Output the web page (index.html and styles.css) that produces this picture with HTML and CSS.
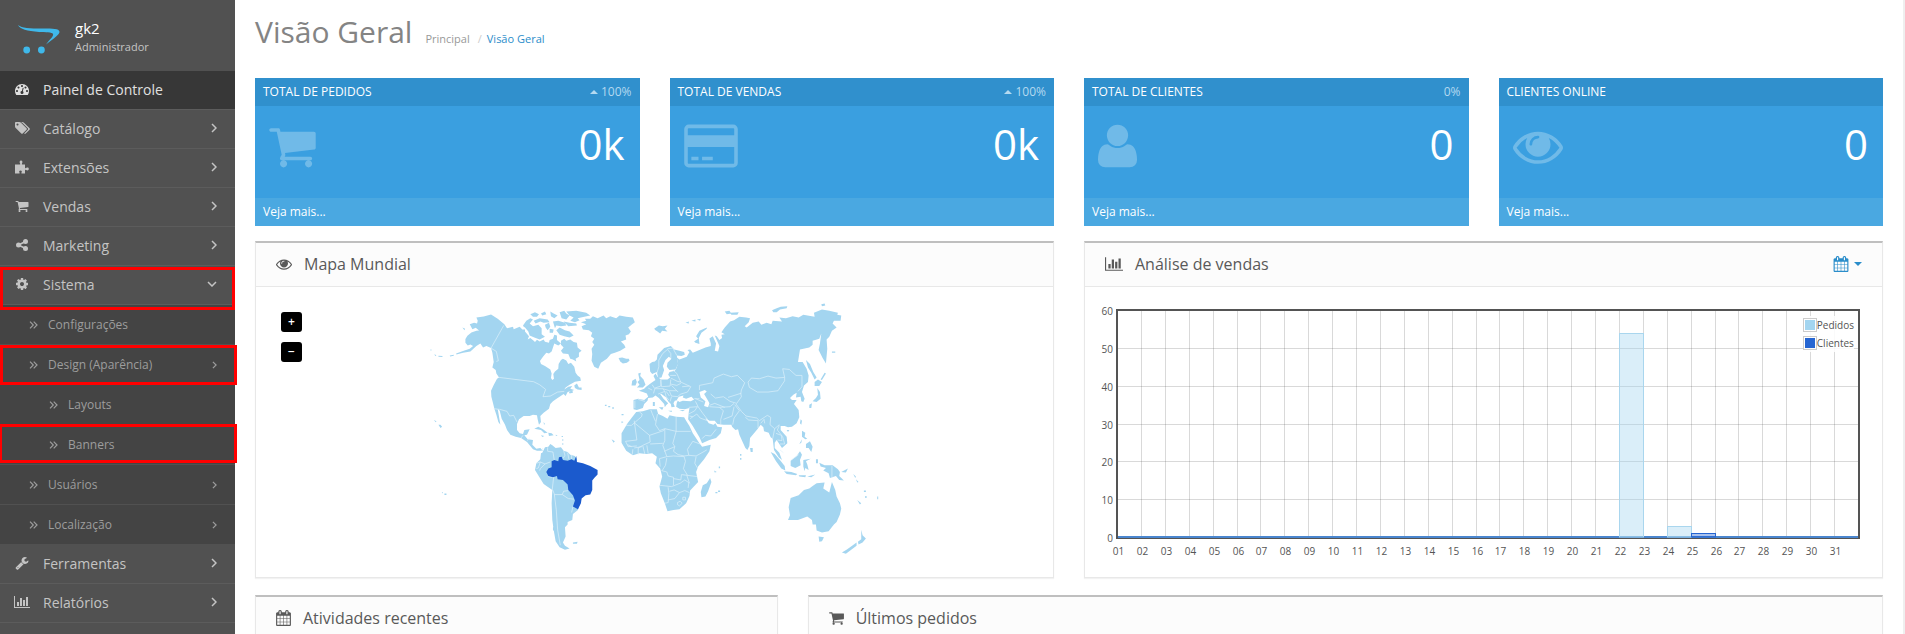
FILE: index.html
```html
<!DOCTYPE html>
<html lang="pt-br">
<head>
    <meta charset="UTF-8">
    <title>Visão Geral</title>
    <meta name="viewport" content="width=device-width, initial-scale=1">
    <link rel="stylesheet" href="styles.css">
</head>
<body>
<!-- icon set -->
<svg class="sprite" aria-hidden="true">
    <symbol id="i-dashboard" viewBox="0 0 1792 1792"><path d="M384 1152q0-53-37.500-90.500t-90.500-37.500-90.500 37.500-37.500 90.500 37.500 90.500 90.500 37.500 90.500-37.500 37.500-90.500zm192-448q0-53-37.500-90.500t-90.500-37.500-90.500 37.500-37.500 90.500 37.500 90.500 90.500 37.500 90.500-37.500 37.500-90.500zm428 481l101-382q6-26-7.500-48.500t-38.500-29.500-48 6.500-30 39.500l-101 382q-60 5-107 43.500t-63 98.500q-20 77 20 146t117 89 146-20 89-117q16-60-6-117t-72-91zm660-33q0-53-37.500-90.500t-90.500-37.500-90.500 37.500-37.500 90.500 37.500 90.500 90.500 37.500 90.500-37.500 37.500-90.500zm-640-640q0-53-37.500-90.500t-90.500-37.500-90.500 37.500-37.500 90.500 37.500 90.500 90.500 37.500 90.500-37.500 37.500-90.500zm448 192q0-53-37.500-90.500t-90.500-37.500-90.500 37.500-37.500 90.500 37.500 90.500 90.500 37.500 90.500-37.500 37.500-90.500zm320 448q0 261-141 483-19 29-54 29h-1402q-35 0-54-29-141-221-141-483 0-182 71-348t191-286 286-191 348-71 348 71 286 191 191 286 71 348z"/></symbol>
    <symbol id="i-tags" viewBox="0 0 2048 1792"><path d="M576 448q0-53-37.500-90.500t-90.500-37.500-90.500 37.500-37.500 90.500 37.500 90.500 90.500 37.500 90.500-37.500 37.500-90.500zm1067 576q0 53-37 90l-491 492q-39 37-91 37-53 0-90-37l-715-716q-38-37-64.500-101t-26.500-117v-416q0-52 38-90t90-38h416q53 0 117 26.500t102 64.500l715 714q37 39 37 91zm384 0q0 53-37 90l-491 492q-39 37-91 37-36 0-59-14t-53-45l470-470q37-37 37-90 0-52-37-91l-715-714q-38-38-102-64.500t-117-26.500h224q53 0 117 26.500t102 64.500l715 714q37 39 37 91z"/></symbol>
    <symbol id="i-puzzle" viewBox="0 0 14 14"><path d="M0 4.500h4.600c.7 0 .9-.6.500-1.100C4.200 2.100 4.600.5 6 .5s1.900 1.500 1 2.900c-.4.600-.1 1.100.6 1.100H10v3c0 .8.500 1 1.100.6 1.200-.9 2.700-.5 2.700.9s-1.500 1.800-2.700 1c-.6-.5-1.100-.2-1.100.5v3H7c-.6 0-.8-.5-.5-1.100.6-1 .3-1.900-1-1.900s-1.700 1-1 2c.4.600.1 1-.5 1H0z"/></symbol>
    <symbol id="i-cart" viewBox="64 0 1664 1792"><path d="M704 1536q0 52-38 90t-90 38-90-38-38-90 38-90 90-38 90 38 38 90zm896 0q0 52-38 90t-90 38-90-38-38-90 38-90 90-38 90 38 38 90zm128-1088v512q0 24-16.500 42.500t-40.500 21.500l-1044 122q13 60 13 70 0 16-24 64h920q26 0 45 19t19 45-19 45-45 19h-1024q-26 0-45-19t-19-45q0-11 8-31.500t16-36 21.500-40 15.500-29.500l-177-823h-204q-26 0-45-19t-19-45 19-45 45-19h256q16 0 28.500 6.500t19.500 15.500 13 24.500 8 26 5.500 29.500 4.500 26h1201q26 0 45 19t19 45z"/></symbol>
    <symbol id="i-share" viewBox="0 0 12 14"><path d="M9.500 3.500L2.500 7l7 3.500" fill="none" stroke="currentColor" stroke-width="1.600"/><circle cx="9.500" cy="3.500" r="2.500"/><circle cx="2.500" cy="7" r="2.500"/><circle cx="9.500" cy="10.500" r="2.500"/></symbol>
    <symbol id="i-cog" viewBox="0 0 1792 1792"><path d="M1152 896q0-106-75-181t-181-75-181 75-75 181 75 181 181 75 181-75 75-181zm512-109v222q0 12-8 23t-20 13l-185 28q-19 54-39 91 35 50 107 138 10 12 10 25t-9 23q-27 37-99 108t-94 71q-12 0-26-9l-138-108q-44 23-91 38-16 136-29 186-7 28-36 28h-222q-14 0-24.500-8.500t-11.500-21.500l-28-184q-49-16-90-37l-141 107q-10 9-25 9-14 0-25-11-126-114-165-168-7-10-7-23 0-12 8-23 15-21 51-66.500t54-70.500q-27-50-41-99l-183-27q-13-2-21-12.500t-8-23.500v-222q0-12 8-23t19-13l186-28q14-46 39-92-40-57-107-138-10-12-10-24 0-10 9-23 26-36 98.500-107.500t94.500-71.500q13 0 26 10l138 107q44-23 91-38 16-136 29-186 7-28 36-28h222q14 0 24.500 8.500t11.500 21.500l28 184q49 16 90 37l142-107q9-9 24-9 13 0 25 10 129 119 165 170 7 8 7 22 0 12-8 23-15 21-51 66.500t-54 70.500q26 50 41 98l183 28q13 2 21 12.500t8 23.500z"/></symbol>
    <symbol id="i-wrench" viewBox="0 0 1792 1792"><path d="M448 1472q0-26-19-45t-45-19-45 19-19 45 19 45 45 19 45-19 19-45zm644-420l-682 682q-37 37-90 37-52 0-91-37l-106-108q-38-36-38-90 0-53 38-91l681-681q39 98 114.500 173.500t173.500 114.500zm634-435q0 39-23 106-47 134-164.500 217.500t-258.500 83.500q-185 0-316.500-131.500t-131.500-316.500 131.500-316.500 316.500-131.500q58 0 121.500 16.500t107.500 46.500q16 11 16 28t-16 28l-293 169v224l193 107q5-3 79-48.500t135.500-81 70.500-35.500q15 0 23.500 10t8.500 25z"/></symbol>
    <symbol id="i-chart" viewBox="0 0 2048 1792"><path d="M640 896v512h-256v-512h256zm384-512v1024h-256v-1024h256zm1024 1152v128h-2048v-1536h128v1408h1920zm-640-896v768h-256v-768h256zm384-384v1152h-256v-1152h256z"/></symbol>
    <symbol id="i-eye" viewBox="0 0 1792 1792"><path d="M1664 960q-152-236-381-353 61 104 61 225 0 185-131.500 316.500t-316.500 131.500-316.500-131.500-131.500-316.500q0-121 61-225-229 117-381 353 133 205 333.500 326.500t434.500 121.500 434.500-121.500 333.500-326.500zm-720-384q0-20-14-34t-34-14q-125 0-214.500 89.500t-89.500 214.500q0 20 14 34t34 14 34-14 14-34q0-86 61-147t147-61q20 0 34-14t14-34zm848 384q0 34-20 69-140 230-376.500 368.500t-499.500 138.500-499.500-139-376.500-368q-20-35-20-69t20-69q140-229 376.500-368t499.500-139 499.500 139 376.500 368q20 35 20 69z"/></symbol>
    <symbol id="i-calendar" viewBox="64 0 1664 1792"><path d="M192 1664h288v-288h-288v288zm352 0h320v-288h-320v288zm-352-352h288v-320h-288v320zm352 0h320v-320h-320v320zm-352-384h288v-288h-288v288zm736 736h320v-288h-320v288zm-384-736h320v-288h-320v288zm768 736h288v-288h-288v288zm-384-352h320v-320h-320v320zm-352-864v-288q0-13-9.500-22.500t-22.500-9.500h-64q-13 0-22.500 9.500t-9.500 22.500v288q0 13 9.500 22.500t22.500 9.500h64q13 0 22.500-9.500t9.500-22.500zm736 864h288v-320h-288v320zm-384-384h320v-288h-320v288zm384 0h288v-288h-288v288zm32-480v-288q0-13-9.500-22.500t-22.500-9.500h-64q-13 0-22.500 9.500t-9.500 22.500v288q0 13 9.500 22.500t22.500 9.500h64q13 0 22.500-9.500t9.500-22.500zm384-64v1280q0 52-38 90t-90 38h-1408q-52 0-90-38t-38-90v-1280q0-52 38-90t90-38h128v-96q0-66 47-113t113-47h64q66 0 113 47t47 113v96h384v-96q0-66 47-113t113-47h64q66 0 113 47t47 113v96h128q52 0 90 38t38 90z"/></symbol>
    <symbol id="i-user" viewBox="192 0 1408 1792"><path d="M1600 1405q0 120-73 189.500t-194 69.500h-874q-121 0-194-69.500t-73-189.500q0-53 3.500-103.500t14-109 26.500-108.500 43-97.500 62-81 85.500-53.500 111.500-20q9 0 42 21.500t74.500 48 108 48 133.500 21.500 133.500-21.500 108-48 74.500-48 42-21.500q61 0 111.500 20t85.500 53.500 62 81 43 97.500 26.500 108.500 14 109 3.500 103.500zm-320-893q0 159-112.500 271.500t-271.500 112.500-271.500-112.500-112.500-271.500 112.500-271.500 271.500-112.500 271.500 112.500 112.500 271.500z"/></symbol>
    <symbol id="i-card" viewBox="0 0 1920 1792"><path d="M1760 128q66 0 113 47t47 113v1216q0 66-47 113t-113 47h-1600q-66 0-113-47t-47-113v-1216q0-66 47-113t113-47h1600zm-1600 128q-13 0-22.500 9.500t-9.500 22.500v224h1664v-224q0-13-9.500-22.500t-22.500-9.500h-1600zm1600 1280q13 0 22.500-9.500t9.500-22.500v-576h-1664v576q0 13 9.500 22.500t22.500 9.500h1600zm-1504-128v-128h256v128h-256zm384 0v-128h384v128h-384z"/></symbol>
    <symbol id="i-right" viewBox="0 0 6 10"><path d="M1 1l4 4-4 4" fill="none" stroke="currentColor" stroke-width="1.500"/></symbol>
    <symbol id="i-down" viewBox="0 0 10 6"><path d="M1 1l4 4 4-4" fill="none" stroke="currentColor" stroke-width="1.500"/></symbol>
    <symbol id="i-double" viewBox="0 0 9 8"><path d="M1 .7L4.300 4 1 7.300M4.700.7L8 4 4.700 7.300" fill="none" stroke="currentColor" stroke-width="1.200"/></symbol>
</svg>

<div class="page">
    <nav class="sidebar">
        <div class="profile">
            <svg class="logo" viewBox="0 0 42 30">
                <path d="M0 1C4 4.200 11 4.500 25 4.500c10 0 16 0 16.500 3.200C41.800 10.500 36 14 28 20.500c3.500-5 8-8.500 7-10.500-1-2-7-1.500-14-2C9 7 2 5 0 1z"/>
                <circle cx="8.700" cy="26" r="3.400"/><circle cx="23.400" cy="26" r="3.400"/>
            </svg>
            <div>
                <div class="profile-name">gk2</div>
                <div class="profile-group">Administrador</div>
            </div>
        </div>
        <ul class="menu">
            <li class="active"><a href="#"><svg class="icon"><use href="#i-dashboard"/></svg>Painel de Controle</a></li>
            <li><a href="#"><svg class="icon"><use href="#i-tags"/></svg>Catálogo<svg class="arrow"><use href="#i-right"/></svg></a></li>
            <li><a href="#"><svg class="icon"><use href="#i-puzzle"/></svg>Extensões<svg class="arrow"><use href="#i-right"/></svg></a></li>
            <li><a href="#"><svg class="icon"><use href="#i-cart"/></svg>Vendas<svg class="arrow"><use href="#i-right"/></svg></a></li>
            <li><a href="#"><svg class="icon"><use href="#i-share"/></svg>Marketing<svg class="arrow"><use href="#i-right"/></svg></a></li>
            <li class="marked marked-main"><a href="#"><svg class="icon"><use href="#i-cog"/></svg>Sistema<svg class="arrow open"><use href="#i-down"/></svg></a></li>
        </ul>
        <ul class="submenu">
            <li><a href="#"><svg class="double"><use href="#i-double"/></svg>Configurações</a></li>
            <li class="marked marked-sub"><a href="#"><svg class="double"><use href="#i-double"/></svg>Design (Aparência)<svg class="arrow small"><use href="#i-right"/></svg></a></li>
            <li class="nested"><a href="#"><svg class="double"><use href="#i-double"/></svg>Layouts</a></li>
            <li class="nested last marked marked-nested"><a href="#"><svg class="double"><use href="#i-double"/></svg>Banners</a></li>
            <li><a href="#"><svg class="double"><use href="#i-double"/></svg>Usuários<svg class="arrow small"><use href="#i-right"/></svg></a></li>
            <li><a href="#"><svg class="double"><use href="#i-double"/></svg>Localização<svg class="arrow small"><use href="#i-right"/></svg></a></li>
        </ul>
        <ul class="menu">
            <li><a href="#"><svg class="icon"><use href="#i-wrench"/></svg>Ferramentas<svg class="arrow"><use href="#i-right"/></svg></a></li>
            <li><a href="#"><svg class="icon"><use href="#i-chart"/></svg>Relatórios<svg class="arrow"><use href="#i-right"/></svg></a></li>
        </ul>
    </nav>

    <main class="content">
        <header class="page-header">
            <h1>Visão Geral</h1>
            <div class="breadcrumb">
                <a href="#">Principal</a>
                <span>/</span>
                <a class="current" href="#">Visão Geral</a>
            </div>
        </header>

        <div class="row">
            <section class="tile">
                <div class="tile-heading">TOTAL DE PEDIDOS <span class="percent"><i class="caret-up"></i>100%</span></div>
                <div class="tile-body"><svg class="tile-icon"><use href="#i-cart"/></svg><span class="value">0k</span></div>
                <a class="tile-footer" href="#">Veja mais...</a>
            </section>
            <section class="tile">
                <div class="tile-heading">TOTAL DE VENDAS <span class="percent"><i class="caret-up"></i>100%</span></div>
                <div class="tile-body"><svg class="tile-icon card"><use href="#i-card"/></svg><span class="value">0k</span></div>
                <a class="tile-footer" href="#">Veja mais...</a>
            </section>
            <section class="tile">
                <div class="tile-heading">TOTAL DE CLIENTES <span class="percent">0%</span></div>
                <div class="tile-body"><svg class="tile-icon user"><use href="#i-user"/></svg><span class="value">0</span></div>
                <a class="tile-footer" href="#">Veja mais...</a>
            </section>
            <section class="tile">
                <div class="tile-heading">CLIENTES ONLINE</div>
                <div class="tile-body"><svg class="tile-icon eye"><use href="#i-eye"/></svg><span class="value">0</span></div>
                <a class="tile-footer" href="#">Veja mais...</a>
            </section>
        </div>

        <div class="row">
            <section class="panel half">
                <div class="panel-heading">
                    <h3><svg class="h-icon"><use href="#i-eye"/></svg>Mapa Mundial</h3>
                </div>
                <div class="panel-body map">
                    <div class="zoom-buttons">
                        <button type="button" aria-label="Aproximar">+</button>
                        <button type="button" aria-label="Afastar">−</button>
                    </div>
                    <svg class="world" viewBox="-447 36 2304 780">
                        <g class="land">
                            <!-- north america -->
                            <path d="M109 190L132 182 150 176 160 168 152 163 144 166 137 158 137 147 143 137 155 127 170 122 178 121 168 113 158 117 150 102 163 98 172 100 174 92 170 82 192 79 214 73 234 86 254 102 262 114 280 110 282 117 300 110 308 118 316 118 316 124 328 138 324 148 332 144 342 152 346 156 352 149 360 154 372 148 376 155 388 158 390 150 400 146 404 134 412 136 412 150 424 160 416 166 404 160 400 172 396 184 388 190 380 188 370 200 361 213 364 222 376 228 392 238 396 250 394 264 398 270 403 266 401 252 406 244 416 236 417 222 424 210 430 206 440 211 446 222 454 218 464 230 468 248 474 256 482 262 484 272 466 275 450 284 438 292 434 298 446 290 458 288 452 296 464 300 444 306 438 318 432 312 420 320 414 324 400 334 392 342 388 356 372 368 362 378 364 396 358 404 354 388 352 376 340 374 330 378 312 378 298 388 292 402 292 420 300 430 310 432 314 420 330 418 322 434 314 436 324 448 340 450 338 464 350 476 362 474 370 482 352 482 340 478 330 466 322 456 304 444 288 440 272 434 262 420 256 404 246 386 240 362 234 356 238 380 242 404 236 396 230 374 224 356 220 340 215 320 214 302 222 285 232 266 238 262 230 250 228 240 218 232 222 216 218 188 214 174 200 168 190 172 182 160 170 168 152 184 130 188 110 193z"/>
                            <path d="M424 152L434 146 440 152 452 148 462 156 472 158 474 172 486 182 478 188 478 200 468 206 470 214 460 208 452 206 446 192 430 190 424 182 432 172 424 164z"/>
                            <path d="M310 106L320 92 332 84 340 88 330 100 340 108 356 104 366 114 366 132 376 140 360 148 344 142 330 136 326 124 316 112 312 110z"/>
                            <path d="M332 72L346 66 358 72 352 80 340 80zM342 92L360 84 384 88 390 96 372 98 362 94 348 100zM364 70L376 64 380 72 368 76zM376 104L388 98 392 110 384 120 378 112zM392 64L402 70 414 76 404 84 394 78zM400 94L416 92 436 98 440 106 424 108 410 106 406 114zM390 116L402 118 400 128 390 128zM410 120L420 112 436 120 450 124 462 136 450 142 434 138 420 134zM420 66L434 62 440 70 450 76 440 88 426 84zM440 64L470 62 500 68 512 76 494 80 474 84 480 90 466 96 452 92 462 82 450 76zM432 94L450 98 470 100 472 106 446 108z"/>
                            <path d="M464 286L472 280 478 292 486 292 486 300 474 298 466 294zM448 306L458 300 460 308 450 310z"/>
                            <path d="M344 416L356 410 370 418 384 428 374 430 364 420 352 418zM386 428L396 430 402 436 388 438zM364 436L374 438 368 441zM372 396L376 402 373 404zM408 434L414 436 409 438z"/>
                            <path d="M426 438h4v3h-4zM428 448h3v4h-3zM428 460h3v4h-3zM56 404L62 404 67 410 62 414zM42 390L50 394 48 397zM32 178h3v3h-3zM44 192L50 196 46 198zM56 197L68 198 68 201 56 200zM90 196L102 194 102 197 91 199zM128 112L136 116 134 120zM66 606L70 608 68 611zM74 611h6v4h-6z"/>
                            <!-- greenland -->
                            <path d="M484 96L500 92 496 86 512 86 520 78 534 84 552 76 560 84 572 78 590 84 600 76 620 80 640 82 646 96 636 104 626 112 634 124 628 132 618 136 620 148 610 152 604 154 614 164 618 172 602 182 586 188 574 192 562 206 544 218 536 236 524 230 516 212 518 192 516 176 524 164 518 156 524 146 514 138 518 128 508 120 490 118 486 108 500 102z"/>
                            <path d="M597 204L608 202 620 206 628 206 630 212 622 218 610 220 602 214z"/>
                            <!-- south america -->
                            <path d="M368 488L376 472 386 470 392 462 398 466 408 474 424 472 432 482 444 486 452 494 466 498 472 506 470 560 480 610 486 626 475 660 460 672 458 690 444 696 444 704 436 712 438 740 430 758 436 768 450 776 436 780 420 772 408 754 402 720 398 690 396 640 398 600 372 582 358 560 346 540 350 520 362 508 364 490zM400 712h5v10h-5zM460 758L474 756 472 762 460 762z"/>
                        </g>
                        <g class="borders">
                            <path d="M252 106L214 174 230 184 236 212 230 214M238 262L342 275 360 284 378 298 370 320 392 318 414 306 434 304M222 356L240 358 262 364 270 378 282 376 292 396M304 444L310 436M322 452L330 444M366 482L370 474M384 472L384 484 400 486 404 512M432 482L436 496 430 506M444 488L448 508M456 494L456 508M350 520L362 516 376 522 392 516M362 516L356 534 350 536M376 522L362 536 360 542M386 560L402 562 398 598 404 612 410 660 414 720 422 766M404 614L428 614 432 604 446 602M428 614L446 626 464 628M460 650L456 668"/>
                        </g>
                        <path class="brazil" d="M396 514L404 510 416 514 418 502 426 500 430 510 444 512 456 508 464 512 470 498 472 516 490 520 512 528 534 540 534 554 524 564 518 572 518 600 512 614 498 616 486 626 484 640 475 658 460 650 466 632 460 616 446 600 444 584 430 570 414 568 412 558 400 562 386 558 380 546 386 536 396 532z"/>
                        <g transform="translate(540 0)">
                            <g class="land">
                                <!-- europe and asia -->
                                <path d="M102 330L116 326 134 330 146 320 142 310 130 306 118 302 134 296 140 290 156 278 168 270 162 258 168 250 174 260 184 268 204 268 212 262 206 254 210 246 226 242 230 236 236 220 232 202 240 208 262 200 270 186 264 180 272 178 280 188 300 180 318 172 334 168 334 160 330 145 340 138 350 160 346 182 356 184 360 168 352 150 346 136 352 138 360 150 368 144 366 134 376 132 366 126 376 112 392 94 404 90 420 80 440 82 452 84 448 96 436 108 442 112 460 98 478 94 486 104 502 98 516 102 520 92 548 94 540 82 560 84 580 78 598 82 612 74 646 80 644 68 668 58 690 62 716 68 714 74 726 76 724 92 704 92 700 100 712 112 698 122 690 140 682 148 684 176 680 220 670 204 658 180 662 160 666 130 660 146 640 152 640 164 630 172 602 178 596 216 610 216 622 236 628 256 626 276 614 286 608 306 616 326 612 336 606 334 604 320 590 322 592 308 582 314 572 324 578 330 592 330 584 342 598 360 600 382 592 400 578 410 566 412 556 408 544 408 544 420 562 440 564 460 548 474 540 462 532 450 526 458 526 474 540 488 548 510 538 502 524 480 520 446 514 442 508 428 494 424 492 412 484 404 474 418 452 444 450 468 444 480 438 474 428 452 420 434 416 418 408 420 398 410 396 404 372 404 354 402 346 392 330 392 318 384 328 400 342 404 348 400 354 410 368 412 364 430 350 444 330 450 308 460 300 442 280 408 266 388 268 366 270 354 256 358 240 356 230 350 232 338 236 330 226 332 222 340 226 350 216 352 214 342 206 334 200 322 186 312 182 312 192 326 206 340 200 346 196 352 194 342 178 324 168 316 160 322 146 324 144 332 134 342 130 354 112 360 102 358z"/>
                                <path d="M150 222L158 216 166 214 172 208 174 194 186 182 194 174 214 168 224 178 240 182 254 186 256 194 246 198 232 196 236 222 228 238 210 240 202 230 204 218 216 206 208 200 198 210 190 228 194 240 186 262 176 264 172 246 158 252 152 244z"/>
                                <path d="M116 250L124 248 122 258 132 268 138 284 130 292 112 292 120 284 114 276 120 270zM98 272L108 266 112 276 108 286 96 286z"/>
                                <path d="M284 154L296 146 290 138 300 122 322 112 322 116 306 128 298 144 300 162 288 158zM164 116L178 106 190 108 204 106 196 116 204 124 188 122 182 130 174 124 168 120zM258 98L268 94 268 100zM276 92L288 88 288 94zM292 88L304 86 302 92zM376 64L390 62 396 70 382 72zM392 68L418 66 414 74 396 74zM518 60L532 54 544 50 564 48 562 54 542 58 532 66 522 66zM666 42L676 40 678 46 668 48zM698 184h10v4h-10z"/>
                                <path d="M620 210L632 222 642 246 652 262 646 268 636 248 626 232zM646 276L656 268 668 276 660 288 646 288zM654 294L662 306 664 326 652 336 640 334 650 324 656 314zM630 344L638 340 636 354 630 354zM676 248L680 250 668 270 664 268zM604 388L608 392 606 404 602 400zM562 420L570 420 566 426z"/>
                                <path d="M608 422L618 428 616 440 624 446 618 448 608 440zM620 462L632 454 640 470 636 486 628 474 620 474zM600 462L608 448 606 458zM514 486L526 492 540 508 556 528 558 542 546 536 530 514zM554 544L576 546 594 552 590 556 562 552zM598 556L620 556 618 562 600 560zM624 560L648 554 636 562zM574 512L592 498 602 484 608 494 602 510 604 526 588 534 574 528zM612 510L634 506 620 514 624 524 628 540 618 534 616 544 612 530zM650 508h6v12h-6zM660 518L676 526 700 526 716 538 722 546 720 558 734 572 720 570 710 558 692 564 688 550 672 542 680 534 664 530zM726 546L746 536 740 548zM762 552L770 560 768 564zM770 568L778 576 774 578z"/>
                                <path d="M452 474L460 474 460 486 454 486zM422 492h4v5h-4zM422 504h4v5h-4zM358 530h4v5h-4zM344 542L352 546 346 548zM348 606h6v4h-6zM356 602h6v4h-6zM16 344h5v4h-5zM26 348h6v4h-6zM38 352h5v4h-5zM66 372h6v4h-6zM36 448L46 454 42 458zM66 394L72 396 66 400zM794 602h6v4h-6zM798 618h4v6h-4zM834 620h3v8h-3z"/>
                                <path d="M240 360L256 360 250 364zM178 352L192 352 188 360zM160 336L166 336 166 348 160 348zM206 362L218 362 216 366z"/>
                                <!-- africa -->
                                <path d="M110 366L130 364 150 358 172 358 176 372 190 378 204 386 210 376 230 380 254 382 260 392 270 408 280 430 292 448 300 460 308 470 334 464 330 484 314 508 296 530 290 546 296 576 272 602 270 618 260 640 240 658 222 660 204 664 196 640 184 610 180 590 188 560 182 536 168 520 172 500 158 490 140 492 120 490 100 496 80 482 66 458 66 430 84 400 96 384z"/>
                                <path d="M332 564L336 576 326 604 318 620 306 622 304 606 310 586 322 580z"/>
                                <!-- oceania -->
                                <path d="M566 690L572 676 568 652 574 624 598 616 614 600 630 596 640 588 652 580 676 578 672 596 690 608 698 576 708 600 712 620 722 640 726 656 722 674 712 696 704 704 688 724 668 728 652 722 650 704 640 704 638 690 624 680 596 690z"/>
                                <path d="M658 740L674 742 668 754 660 756zM786 720L790 736 800 746 790 758 778 764 776 756 786 748zM772 758L772 768 756 780 740 792 728 788 744 778zM774 630L786 640 782 644z"/>
                            </g>
                            <g class="water">
                                <path d="M232 330L238 320 252 316 250 322 260 326 276 320 284 328 274 334 250 332 240 336z"/>
                                <path d="M300 306L316 300 322 304 314 312 326 332 330 340 326 352 314 348 318 334 304 322z"/>
                            </g>
                            <g class="borders">
                                <path d="M120 366L128 372 126 380 96 406 80 406M104 392L112 450 78 454M104 398L150 436 192 422 196 416M154 360L158 370 168 394M174 372L168 404 180 422 196 416 230 424M230 380L230 424 274 424M196 418L196 452 190 466 202 500M150 436L152 456 130 466 116 474 116 494M130 468L136 492M142 466L146 490M152 462L190 460M230 424L220 460 226 470 194 484M100 478L98 494M84 464L96 470M78 454L86 470 112 468M104 474L128 470M202 500L180 506 182 530M226 470L222 484 236 494 254 498 268 496 264 478 280 454 302 462M268 496L290 498 322 480M290 500L286 520 294 534M254 500L258 514 252 536 264 556M202 504L198 526 188 542M202 500L222 498 254 500M186 542L202 546 206 558 222 562 222 586M180 586L216 590 242 580 256 570 268 578 266 594M222 566L244 570 246 554 262 556 270 580M206 592L208 610 206 638 196 640M210 604L224 600 240 608 226 626 206 630M240 608L256 602 270 608M234 638L242 634 248 640 240 648 234 644zM250 622h8v8h-8zM262 556L294 560"/>
                                <path d="M220 240L232 250 244 276 274 290 264 306 244 312 236 318M300 300L300 286 340 278 344 264 372 252 396 260 414 256 436 278 426 300 424 312M300 326L284 326M334 312L348 324 372 320 392 334 412 340 426 320 424 310 386 322M446 276L456 264 480 266 506 258 530 264 556 262 556 272 536 302 506 306 474 306 450 292 446 276M556 262L550 236 570 238 590 256 608 256 608 290 596 304M410 342L426 364 440 378 472 384 480 392 504 376 514 382 512 404 526 416 540 404M330 350L360 352 372 362 364 388 364 404M360 352L392 350 404 340M372 388L398 378 404 350M406 344L420 362 404 384 400 404M330 346L346 340 376 352M438 382L448 390 476 392 476 414M484 400L494 388 496 400M540 406L534 420 550 440 556 462 542 462M526 416L520 446M530 430L546 436 548 452 534 450M288 334L296 350 310 370 324 388M268 372L286 362 294 350 268 352M272 386L292 372 302 384 324 392M308 446L318 436 334 438 350 418M270 378L280 380M288 326L312 336"/>
                                <path d="M172 250L178 230 178 210 190 190 204 178M204 178L214 190 214 204M204 176L220 174 232 196M158 284L166 296 162 310M166 294L184 288 184 268M184 270L186 290 212 288 214 268M166 296L190 296 196 304 176 312M190 296L210 302 232 302M196 304L200 320 208 330M210 304L216 318 236 320M116 328L136 334M106 332L106 354M146 294L158 300M214 264L234 274 244 276M212 256L230 256M214 282L232 286 244 280M200 304L210 318M216 320L212 334M216 286L236 306M248 290L270 288M698 528V564M542 480L552 488M598 494L576 510"/>
                            </g>
                        </g>
                    </svg>
                </div>
            </section>

            <section class="panel half">
                <div class="panel-heading">
                    <h3><svg class="h-icon wide"><use href="#i-chart"/></svg>Análise de vendas</h3>
                    <button type="button" class="range" aria-label="Período"><svg class="h-icon"><use href="#i-calendar"/></svg><i class="caret"></i></button>
                </div>
                <div class="panel-body">
                    <div class="chart" id="chart-sale">
                        <ul class="legend">
                            <li><span class="swatch orders"></span>Pedidos</li>
                            <li><span class="swatch customers"></span>Clientes</li>
                        </ul>
                    </div>
                </div>
            </section>
        </div>

        <div class="row">
            <section class="panel third">
                <div class="panel-heading">
                    <h3><svg class="h-icon narrow"><use href="#i-calendar"/></svg>Atividades recentes</h3>
                </div>
                <div class="panel-body"></div>
            </section>
            <section class="panel two-thirds">
                <div class="panel-heading">
                    <h3><svg class="h-icon narrow"><use href="#i-cart"/></svg>Últimos pedidos</h3>
                </div>
                <div class="panel-body"></div>
            </section>
        </div>
    </main>
</div>

<script>
const chart = document.getElementById('chart-sale');
const NS = 'http://www.w3.org/2000/svg';
const orders = { 22: 54, 24: 3 };
const customers = { 25: 1 };

function add(parent, tag, attrs, text) {
    const el = document.createElementNS(NS, tag);
    for (const key in attrs) el.setAttribute(key, attrs[key]);
    if (text) el.textContent = text;
    parent.appendChild(el);
    return el;
}

function drawChart() {
    const old = chart.querySelector('svg');
    if (old) old.remove();

    const width = chart.clientWidth;
    const height = 260;
    const left = 17, right = width - 8, top = 8, bottom = 236;
    const step = (right - left - 1) / 31;
    const x = day => Math.round(left + (day - 1) * step) + 0.5;
    const y = value => Math.round(bottom - 1 - value * (bottom - top - 1) / 60) + 0.5;

    const svg = add(chart, 'svg', { width: width, height: height });

    // grid and axis labels
    for (let day = 1; day <= 31; day++) {
        if (day > 1) add(svg, 'path', { class: 'grid', d: `M${x(day)} ${top}V${bottom}` });
        add(svg, 'text', { class: 'tick', x: x(day) + 1, y: 253, 'text-anchor': 'middle' }, String(day).padStart(2, '0'));
    }
    for (let value = 0; value <= 60; value += 10) {
        if (value > 0 && value < 60) add(svg, 'path', { class: 'grid', d: `M${left} ${y(value)}H${right}` });
        add(svg, 'text', { class: 'tick', x: 13, y: y(value) + 4, 'text-anchor': 'end' }, String(value));
    }

    add(svg, 'rect', { class: 'frame', x: left, y: top, width: right - left, height: bottom - top });
    add(svg, 'path', { class: 'zero', d: `M${left + 1} ${bottom - 1}H${right - 1}` });

    // bars
    [[orders, 'bar-orders'], [customers, 'bar-customers']].forEach(([data, name]) => {
        for (const day in data) {
            const d = Number(day);
            add(svg, 'rect', { class: name, x: x(d), y: y(data[day]), width: x(d + 1) - x(d), height: bottom - 1 - y(data[day]) });
        }
    });
}

drawChart();
window.addEventListener('resize', drawChart);
</script>
</body>
</html>
```
FILE: styles.css
```css
* {
    box-sizing: border-box;
}

body {
    margin: 0;
    font-family: "Open Sans", "Noto Sans", sans-serif;
    font-size: 12px;
    color: #666;
    background: #fff;
}

a {
    text-decoration: none;
    color: inherit;
}

ul {
    list-style: none;
    margin: 0;
    padding: 0;
}

svg {
    fill: currentColor;
    flex: none;
}

.sprite {
    position: absolute;
    width: 0;
    height: 0;
}

.page {
    display: flex;
    height: 100vh;
    overflow: hidden;
    border-right: 2px solid #efefef;
}

/* sidebar */
.sidebar {
    width: 235px;
    flex: none;
    background: #515151;
}

.profile {
    display: flex;
    gap: 15px;
    height: 71px;
    padding: 18px 18px 0;
    color: #c4c4c4;
}

.logo {
    width: 42px;
    height: 30px;
    margin-top: 6px;
    color: #3fb8ea;
}

.profile-name {
    font-size: 15px;
    line-height: 21px;
    color: #fff;
}

.profile-group {
    font-size: 11px;
    line-height: 15px;
}

.menu a,
.submenu a {
    display: flex;
    align-items: center;
    height: 100%;
}

.menu li {
    height: 39px;
    border-bottom: 1px solid #5c5c5c;
    font-size: 14px;
    color: #c4c4c4;
}

.menu a {
    gap: 12px;
    padding: 0 18px 2px 13px;
}

.menu .active {
    background: #373737;
    color: #e0e0e0;
}

.icon {
    width: 18px;
    height: 14px;
}

.arrow {
    width: 6px;
    height: 10px;
    margin-left: auto;
}

.arrow.open {
    width: 10px;
    height: 6px;
}

.arrow.small {
    width: 5px;
    height: 8px;
}

.submenu {
    background: #444;
    color: #9d9d9d;
}

.submenu li {
    height: 40px;
    border-bottom: 1px solid #515151;
}

.submenu a {
    gap: 10px;
    padding: 0 18px 0 29px;
}

.submenu .nested a {
    padding-left: 49px;
}

.submenu .nested,
.submenu .marked-sub {
    border-bottom-color: #444;
}

.submenu .last {
    border-bottom-color: #515151;
}

.double {
    width: 9px;
    height: 8px;
}

/* red highlight frames */
.marked {
    position: relative;
}

.marked::after {
    content: "";
    position: absolute;
    z-index: 1;
    border: 3px solid #f00;
    pointer-events: none;
}

.marked-main::after {
    inset: 1px 0 -6px 0;
}

.marked-sub::after {
    inset: 0 -2px -1px 0;
}

.marked-nested::after {
    inset: -1px -2px 1px -1px;
}

/* content */
.content {
    flex: 1;
    min-width: 0;
    padding: 0 20px;
}

.page-header {
    display: flex;
    align-items: baseline;
    gap: 13px;
    height: 78px;
    padding-top: 12px;
}

h1 {
    margin: 0;
    font-size: 30px;
    line-height: 40px;
    font-weight: 400;
    color: #848484;
}

.breadcrumb {
    display: flex;
    gap: 5px;
    font-size: 11px;
    color: #999;
}

.breadcrumb span {
    padding-left: 3px;
    color: #ccc;
}

.breadcrumb .current {
    color: #2a8dca;
}

.row {
    display: flex;
    gap: 30px;
}

/* tiles */
.tile {
    flex: 1;
    margin-bottom: 15px;
    background: #3a9fe0;
    color: #fff;
}

.tile-heading {
    display: flex;
    justify-content: space-between;
    padding: 0 8px;
    line-height: 28px;
    background: #3090cd;
}

.percent {
    color: #b4d9f0;
}

.caret-up {
    display: inline-block;
    margin-right: 3px;
    border: 4px solid transparent;
    border-top: 0;
    border-bottom-color: #b4d9f0;
    vertical-align: 2px;
}

.tile-body {
    display: flex;
    justify-content: space-between;
    height: 92px;
    padding: 15px 15px 15px 14px;
    line-height: 46px;
}

.tile-icon {
    width: 47px;
    height: 50px;
    color: #70bae8;
}

.tile-icon.card {
    width: 54px;
}

.tile-icon.user {
    width: 39px;
}

.tile-icon.eye {
    width: 50px;
}

.value {
    font-size: 42px;
}

.tile-footer {
    display: block;
    padding: 0 8px;
    line-height: 28px;
    background: #4aa8e1;
}

/* panels */
.panel {
    min-width: 0;
    margin-bottom: 17px;
    border: 1px solid #e8e8e8;
    border-top: 2px solid #bfbfbf;
    box-shadow: 0 1px 1px rgba(0,0,0,0.05);
}

.half {
    flex: 1;
}

.third {
    width: calc((100% - 60px) / 3);
}

.two-thirds {
    flex: 1;
}

.panel-heading {
    display: flex;
    justify-content: space-between;
    align-items: center;
    height: 44px;
    padding: 0 20px 2px;
    background: #fcfcfc;
    border-bottom: 1px solid #e8e8e8;
    color: #595959;
}

h3 {
    display: flex;
    align-items: center;
    gap: 12px;
    margin: 0;
    font-size: 16px;
    line-height: 22px;
    font-weight: 400;
}

.h-icon {
    width: 16px;
    height: 16px;
}

.h-icon.wide {
    width: 18px;
}

.h-icon.narrow {
    width: 15px;
}

.range {
    display: flex;
    align-items: center;
    gap: 5px;
    padding: 0;
    border: 0;
    background: none;
    color: #2a8dca;
    cursor: pointer;
}

.caret {
    border: 4px solid transparent;
    border-top-color: #2a8dca;
    border-bottom: 0;
}

.panel-body {
    padding: 15px;
}

/* map */
.map {
    position: relative;
}

.world {
    display: block;
    width: 100%;
    height: 260px;
}

.land {
    fill: #a3d5f0;
}

.brazil {
    fill: #1b5acd;
}

.water {
    fill: #fff;
}

.borders {
    fill: none;
    stroke: #e0f1fa;
    stroke-width: 2;
}

.zoom-buttons {
    position: absolute;
    top: 25px;
    left: 25px;
    display: flex;
    flex-direction: column;
    gap: 10px;
}

.zoom-buttons button {
    width: 21px;
    height: 20px;
    padding: 0;
    border: 0;
    border-radius: 3px;
    background: #000;
    color: #fff;
    font: 600 12px/18px "Open Sans", sans-serif;
    cursor: pointer;
}

/* sales chart */
.chart {
    position: relative;
    height: 260px;
}

.chart svg {
    display: block;
}

.grid {
    stroke: #545454;
    stroke-opacity: 0.22;
}

.frame {
    fill: none;
    stroke: #545454;
    stroke-width: 2;
}

.zero {
    stroke: #4a86cf;
    stroke-width: 2;
}

.tick {
    font-size: 10px;
    fill: #545454;
}

.bar-orders {
    fill: #a3d5f0;
    fill-opacity: 0.4;
    stroke: #a9d6ee;
}

.bar-customers {
    fill: #2565d2;
    fill-opacity: 0.4;
    stroke: #2565d2;
}

.legend {
    position: absolute;
    top: 14px;
    right: 13px;
    background: rgba(255,255,255,0.85);
    font-size: 10px;
    line-height: 18px;
    color: #545454;
}

.legend li {
    display: flex;
    align-items: center;
}

.swatch {
    width: 14px;
    height: 14px;
    padding: 1px;
    border: 1px solid #ccc;
    background-clip: content-box;
}

.swatch.orders {
    background-color: #a3d5f0;
}

.swatch.customers {
    background-color: #2565d2;
}
```
